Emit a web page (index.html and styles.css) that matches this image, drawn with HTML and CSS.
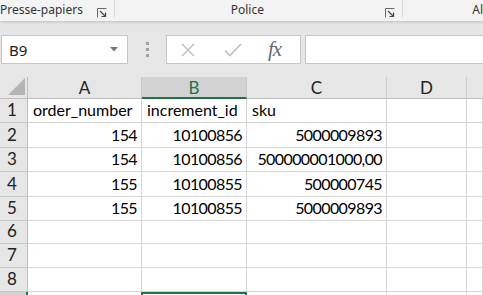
FILE: index.html
```html
<!DOCTYPE html>
<html lang="fr">
<head>
    <meta charset="UTF-8">
    <title>Classeur - Excel</title>
    <link rel="stylesheet" href="styles.css">
</head>
<body>

    <div class="ribbon">
        <div class="group group-clip">
            <span class="group-label">Presse-papiers</span>
            <span class="launcher"><svg width="10" height="10" viewBox="0 0 10 10"><path d="M0.5 9.5V0.5H9.5" fill="none" stroke="#666"/><path d="M3 3L8.5 8.5M8.5 4.5V8.5H4.5" fill="none" stroke="#444" stroke-width="1.2"/></svg></span>
        </div>
        <div class="group group-font">
            <span class="group-label">Police</span>
            <span class="launcher"><svg width="10" height="10" viewBox="0 0 10 10"><path d="M0.5 9.5V0.5H9.5" fill="none" stroke="#666"/><path d="M3 3L8.5 8.5M8.5 4.5V8.5H4.5" fill="none" stroke="#444" stroke-width="1.2"/></svg></span>
        </div>
        <div class="group group-align">
            <span class="group-label">Al</span>
        </div>
    </div>

    <div class="formula-bar">
        <div class="name-box">
            <span>B9</span>
            <svg width="8" height="5" viewBox="0 0 8 5"><path d="M0 0H8L4 4.5Z" fill="#777"/></svg>
        </div>
        <div class="grip"><i></i><i></i><i></i></div>
        <div class="fx-buttons">
            <svg width="16" height="14" viewBox="0 0 16 14"><path d="M2 1L14 13M14 1L2 13" stroke="#c4c4c4" stroke-width="1.6" fill="none"/></svg>
            <svg width="18" height="14" viewBox="0 0 18 14"><path d="M1 7.5L6 12.5L17 1" stroke="#c4c4c4" stroke-width="1.8" fill="none"/></svg>
            <span class="fx">fx</span>
        </div>
        <div class="formula-input"></div>
    </div>

    <div class="sheet">
        <div class="corner"><span class="tri"></span></div>
        <div class="col-head">A</div>
        <div class="col-head active">B</div>
        <div class="col-head">C</div>
        <div class="col-head">D</div>
        <div class="col-head last"></div>

        <div class="row-head">1</div>
        <div class="cell">order_number</div>
        <div class="cell">increment_id</div>
        <div class="cell">sku</div>
        <div class="cell"></div>
        <div class="cell"></div>

        <div class="row-head">2</div>
        <div class="cell num">154</div>
        <div class="cell num">10100856</div>
        <div class="cell num">5000009893</div>
        <div class="cell"></div>
        <div class="cell"></div>

        <div class="row-head">3</div>
        <div class="cell num">154</div>
        <div class="cell num">10100856</div>
        <div class="cell num">500000001000,00</div>
        <div class="cell"></div>
        <div class="cell"></div>

        <div class="row-head">4</div>
        <div class="cell num">155</div>
        <div class="cell num">10100855</div>
        <div class="cell num">500000745</div>
        <div class="cell"></div>
        <div class="cell"></div>

        <div class="row-head">5</div>
        <div class="cell num">155</div>
        <div class="cell num">10100855</div>
        <div class="cell num">5000009893</div>
        <div class="cell"></div>
        <div class="cell"></div>

        <div class="row-head">6</div>
        <div class="cell"></div>
        <div class="cell"></div>
        <div class="cell"></div>
        <div class="cell"></div>
        <div class="cell"></div>

        <div class="row-head">7</div>
        <div class="cell"></div>
        <div class="cell"></div>
        <div class="cell"></div>
        <div class="cell"></div>
        <div class="cell"></div>

        <div class="row-head">8</div>
        <div class="cell"></div>
        <div class="cell"></div>
        <div class="cell"></div>
        <div class="cell"></div>
        <div class="cell"></div>

        <div class="row-head active">9</div>
        <div class="cell"></div>
        <div class="cell selected"></div>
        <div class="cell"></div>
        <div class="cell"></div>
        <div class="cell"></div>
    </div>

</body>
</html>
```

FILE: styles.css
```css
* {
    box-sizing: border-box;
}

body {
    margin: 0;
    width: 483px;
    height: 295px;
    overflow: hidden;
    background-color: #e6e6e6;
    font-family: "Noto Sans", sans-serif;
}

/* Ribbon group labels */
.ribbon {
    display: flex;
    height: 21px;
    background-color: #f3f3f3;
    box-shadow: 0 1px 3px rgba(0, 0, 0, 0.18);
    position: relative;
    color: #333;
    font-size: 12px;
}

.group {
    display: flex;
    align-items: flex-start;
    height: 17px;
    border-right: 1px solid #d4d4d4;
}

.group-label {
    line-height: 20px;
    white-space: nowrap;
}

.launcher {
    display: flex;
    padding-top: 8px;
}

.group-clip {
    width: 115px;
}

.group-clip .launcher {
    margin-left: 14px;
}

.group-font {
    width: 289px;
    padding-left: 116px;
}

.group-font .launcher {
    margin-left: 121px;
}

.group-align {
    border-right: none;
    padding-left: 69px;
}

/* Name box and formula bar */
.formula-bar {
    display: flex;
    align-items: stretch;
    height: 29px;
    margin-top: 14px;
    padding-left: 1px;
}

.name-box {
    width: 127px;
    display: flex;
    align-items: center;
    justify-content: space-between;
    padding: 0 9px 0 7px;
    background-color: #fff;
    border: 1px solid #c6c6c6;
    font-size: 15px;
    color: #222;
}

.grip {
    width: 38px;
    display: flex;
    flex-direction: column;
    align-items: center;
    justify-content: center;
    gap: 3px;
}

.grip i {
    width: 3px;
    height: 3px;
    background-color: #a0a0a0;
}

.fx-buttons {
    width: 135px;
    display: flex;
    align-items: center;
    padding-left: 13px;
    gap: 28px;
    background-color: #fff;
    border: 1px solid #c6c6c6;
}

.fx {
    font-family: "Liberation Serif", serif;
    font-style: italic;
    font-size: 21px;
    color: #6a6a6a;
    margin-left: -2px;
    letter-spacing: -1px;
}

.formula-input {
    flex: 1;
    margin-left: 4px;
    background-color: #fff;
    border: 1px solid #c6c6c6;
    border-right: none;
}

/* Sheet grid */
.sheet {
    display: grid;
    grid-template-columns: 28px 114px 105px 140px 80px 1fr;
    grid-template-rows: 22px 24px 25px 24px 25px 24px 23px 24px 24px 24px;
    margin-top: 13px;
    background-color: #fff;
    font-family: "Lato", "Liberation Sans", sans-serif;
    font-size: 16px;
    color: #000;
}

.corner {
    background-color: #e6e6e6;
    border-right: 1px solid #bdbdbd;
    border-bottom: 1px solid #bdbdbd;
    position: relative;
}

.tri {
    position: absolute;
    left: 8px;
    bottom: 3px;
    width: 0;
    height: 0;
    border-left: 17px solid transparent;
    border-bottom: 17px solid #b4b4b4;
}

.col-head {
    background-color: #e6e6e6;
    border-right: 1px solid #c8c8c8;
    border-bottom: 1px solid #bdbdbd;
    text-align: center;
    line-height: 21px;
    font-size: 17px;
    color: #222;
}

.col-head.last {
    border-right: none;
}

.col-head.active {
    background-color: #d2d2d2;
    color: #217346;
    border-bottom: 2px solid #217346;
}

.row-head {
    background-color: #e6e6e6;
    border-right: 1px solid #bdbdbd;
    border-bottom: 1px solid #c8c8c8;
    padding-left: 7px;
    display: flex;
    align-items: flex-end;
    padding-bottom: 2px;
    font-size: 17px;
    color: #222;
}

.row-head.active {
    background-color: #d2d2d2;
    border-right: 2px solid #217346;
}

.cell {
    border-right: 1px solid #d4d4d4;
    border-bottom: 1px solid #d4d4d4;
    padding: 0 4px 3px 5px;
    display: flex;
    align-items: flex-end;
    white-space: nowrap;
    overflow: hidden;
}

.cell.num {
    justify-content: flex-end;
    letter-spacing: -0.6px;
}

.cell.selected {
    border: 2px solid #217346;
    margin-left: -1px;
}
```
